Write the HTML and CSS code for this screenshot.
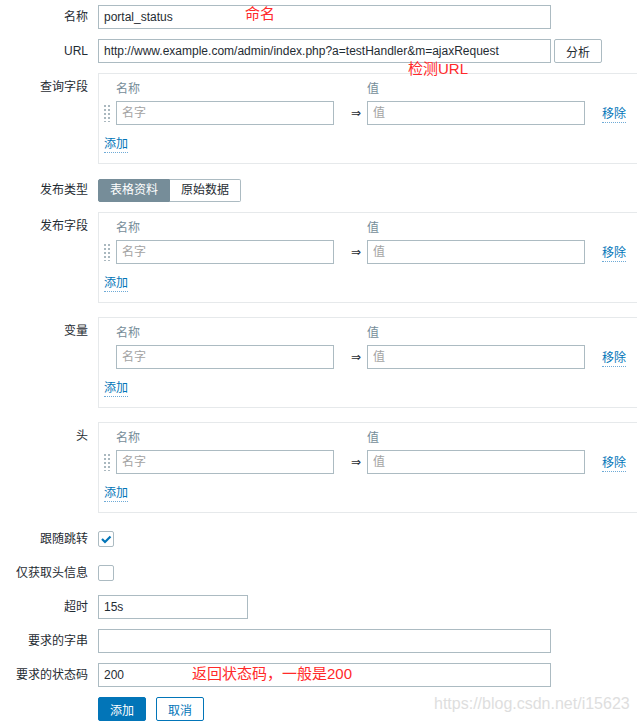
FILE: index.html
```html
<!DOCTYPE html>
<html lang="zh-CN">
<head>
  <meta charset="UTF-8">
  <meta name="viewport" content="width=device-width, initial-scale=1.0">
  <title>Web 场景步骤</title>
  <link rel="stylesheet" href="styles.css">
</head>
<body>

<div class="step-form">
  <!-- 名称 -->
  <div class="form-row">
    <label class="form-label">名称</label>
    <div class="form-field">
      <input type="text" class="input input-wide" value="portal_status">
    </div>
  </div>

  <!-- URL -->
  <div class="form-row">
    <label class="form-label">URL</label>
    <div class="form-field">
      <input type="text" class="input input-wide" value="http://www.example.com/admin/index.php?a=testHandler&amp;m=ajaxRequest">
      <button type="button" class="btn-grey">分析</button>
    </div>
  </div>

  <!-- 查询字段 -->
  <div class="form-row box-row">
    <label class="form-label">查询字段</label>
    <div class="form-field">
      <div class="pair-box">
        <div class="pair-head">
          <span class="col-handle"></span>
          <span class="col-name">名称</span>
          <span class="col-arrow"></span>
          <span class="col-value">值</span>
        </div>
        <div class="pair-row">
          <span class="col-handle"><span class="drag-handle"></span></span>
          <input type="text" class="input col-name" placeholder="名字">
          <span class="col-arrow">&rArr;</span>
          <input type="text" class="input col-value" placeholder="值">
          <a href="#" class="link-action">移除</a>
        </div>
        <div class="pair-add"><a href="#" class="link-action">添加</a></div>
      </div>
    </div>
  </div>

  <!-- 发布类型 -->
  <div class="form-row">
    <label class="form-label">发布类型</label>
    <div class="form-field">
      <div class="radio-seg">
        <span class="seg seg-on">表格资料</span>
        <span class="seg">原始数据</span>
      </div>
    </div>
  </div>

  <!-- 发布字段 -->
  <div class="form-row box-row">
    <label class="form-label">发布字段</label>
    <div class="form-field">
      <div class="pair-box">
        <div class="pair-head">
          <span class="col-handle"></span>
          <span class="col-name">名称</span>
          <span class="col-arrow"></span>
          <span class="col-value">值</span>
        </div>
        <div class="pair-row">
          <span class="col-handle"><span class="drag-handle"></span></span>
          <input type="text" class="input col-name" placeholder="名字">
          <span class="col-arrow">&rArr;</span>
          <input type="text" class="input col-value" placeholder="值">
          <a href="#" class="link-action">移除</a>
        </div>
        <div class="pair-add"><a href="#" class="link-action">添加</a></div>
      </div>
    </div>
  </div>

  <!-- 变量 -->
  <div class="form-row box-row">
    <label class="form-label">变量</label>
    <div class="form-field">
      <div class="pair-box">
        <div class="pair-head">
          <span class="col-handle"></span>
          <span class="col-name">名称</span>
          <span class="col-arrow"></span>
          <span class="col-value">值</span>
        </div>
        <div class="pair-row">
          <span class="col-handle"></span>
          <input type="text" class="input col-name" placeholder="名字">
          <span class="col-arrow">&rArr;</span>
          <input type="text" class="input col-value" placeholder="值">
          <a href="#" class="link-action">移除</a>
        </div>
        <div class="pair-add"><a href="#" class="link-action">添加</a></div>
      </div>
    </div>
  </div>

  <!-- 头 -->
  <div class="form-row box-row">
    <label class="form-label">头</label>
    <div class="form-field">
      <div class="pair-box">
        <div class="pair-head">
          <span class="col-handle"></span>
          <span class="col-name">名称</span>
          <span class="col-arrow"></span>
          <span class="col-value">值</span>
        </div>
        <div class="pair-row">
          <span class="col-handle"><span class="drag-handle"></span></span>
          <input type="text" class="input col-name" placeholder="名字">
          <span class="col-arrow">&rArr;</span>
          <input type="text" class="input col-value" placeholder="值">
          <a href="#" class="link-action">移除</a>
        </div>
        <div class="pair-add"><a href="#" class="link-action">添加</a></div>
      </div>
    </div>
  </div>

  <!-- 跟随跳转 -->
  <div class="form-row">
    <label class="form-label">跟随跳转</label>
    <div class="form-field">
      <span class="checkbox">
        <svg width="14" height="14" viewBox="0 0 14 14"><path d="M3 7 L6 10 L11.5 4.5" fill="none" stroke="#0275b8" stroke-width="2.2"/></svg>
      </span>
    </div>
  </div>

  <!-- 仅获取头信息 -->
  <div class="form-row">
    <label class="form-label">仅获取头信息</label>
    <div class="form-field">
      <span class="checkbox"></span>
    </div>
  </div>

  <div class="form-row">
    <label class="form-label">超时</label>
    <div class="form-field">
      <input type="text" class="input input-small" value="15s">
    </div>
  </div>

  <div class="form-row">
    <label class="form-label">要求的字串</label>
    <div class="form-field">
      <input type="text" class="input input-wide" value="">
    </div>
  </div>

  <div class="form-row">
    <label class="form-label">要求的状态码</label>
    <div class="form-field">
      <input type="text" class="input input-wide" value="200">
    </div>
  </div>

  <div class="form-row">
    <span class="form-label"></span>
    <div class="form-field">
      <button type="button" class="btn-main">添加</button>
      <button type="button" class="btn-alt">取消</button>
    </div>
  </div>

  <!-- annotations drawn over the screenshot -->
  <span class="note note-name">命名</span>
  <span class="note note-url">检测URL</span>
  <span class="note note-code">返回状态码，一般是200</span>
  <span class="watermark">https://blog.csdn.net/i15623</span>
</div>

</body>
</html>
```

FILE: styles.css
```css
html {
  overflow: hidden;
}

body {
  margin: 0;
  background: #fff;
  color: #1f2c33;
  font-family: "Liberation Sans", Arial, "Noto Sans CJK SC", sans-serif;
  font-size: 12px;
}

.step-form {
  position: relative;
  padding-top: 5px;
}

/* form rows */
.form-row {
  display: flex;
  margin-bottom: 10px;
}

.box-row {
  margin-bottom: 14px;
}

.form-label {
  flex-shrink: 0;
  width: 88px;
  padding-right: 10px;
  text-align: right;
  line-height: 24px;
}

.box-row .form-label {
  padding-top: 2px;
}

.form-field {
  display: flex;
  align-items: center;
  min-height: 24px;
}

/* inputs */
.input {
  box-sizing: border-box;
  height: 24px;
  margin: 0;
  padding: 0 5px;
  border: 1px solid #acbbc2;
  border-radius: 0;
  background: #fff;
  color: #1f2c33;
  font-family: inherit;
  font-size: 12px;
  outline: none;
}

.input::placeholder {
  color: #a3a3a3;
}

.input-wide {
  width: 453px;
}

.input-small {
  width: 150px;
}

.btn-grey {
  box-sizing: border-box;
  width: 48px;
  height: 24px;
  margin-left: 3px;
  border: 1px solid #acbbc2;
  border-radius: 2px;
  background: #fff;
  color: #1f2c33;
  font-family: inherit;
  font-size: 12px;
}

/* key/value boxes */
.pair-box {
  width: 560px;
  padding: 5px 5px 8px 5px;
  border: 1px solid #e6e9eb;
}

.pair-head {
  display: flex;
  height: 20px;
  line-height: 20px;
  color: #768d99;
}

.pair-row {
  display: flex;
  align-items: center;
  height: 24px;
  margin-top: 2px;
}

.col-handle {
  display: flex;
  flex-shrink: 0;
  width: 12px;
}

.col-name,
.col-value {
  flex-shrink: 0;
  width: 218px;
}

.col-arrow {
  flex-shrink: 0;
  width: 33px;
  padding-left: 17px;
  box-sizing: border-box;
  font-family: "DejaVu Sans", sans-serif;
  font-size: 12px;
  color: #1f2c33;
}

.drag-handle {
  width: 6px;
  height: 18px;
  background-image: radial-gradient(circle, #aab8bf 1.1px, transparent 1.3px);
  background-size: 4px 4px;
  background-position: -1px 0;
}

.link-action {
  margin-left: 17px;
  margin-top: 4px;
  color: #0275b8;
  text-decoration: none;
  border-bottom: 1px dotted #6eaad6;
  line-height: 15px;
}

.pair-add {
  margin-top: 6px;
  height: 24px;
  display: flex;
  align-items: center;
}

.pair-add .link-action {
  margin-left: 0;
}

/* radio toggle */
.radio-seg {
  display: flex;
  height: 23px;
  margin-top: 1px;
}

.seg {
  box-sizing: border-box;
  height: 23px;
  line-height: 21px;
  padding: 0 11px;
  border: 1px solid #acbbc2;
  background: #fff;
}

.seg-on {
  width: 72px;
  border-color: #768d99;
  border-radius: 2px 0 0 2px;
  background: #768d99;
  color: #fff;
}

.seg:last-child {
  border-left: none;
  border-radius: 0 2px 2px 0;
}

/* checkbox */
.checkbox {
  box-sizing: border-box;
  display: flex;
  align-items: center;
  justify-content: center;
  width: 16px;
  height: 16px;
  margin-top: -1px;
  border: 1px solid #acbbc2;
  border-radius: 2px;
  background: #fff;
}

/* buttons */
.btn-main,
.btn-alt {
  box-sizing: border-box;
  width: 48px;
  height: 24px;
  margin-right: 10px;
  border: 1px solid #0275b8;
  border-radius: 2px;
  font-family: inherit;
  font-size: 12px;
}

.btn-main {
  background: #0275b8;
  color: #fff;
}

.btn-alt {
  background: #fff;
  color: #0275b8;
}

/* red notes + watermark */
.note {
  position: absolute;
  color: #ff2a2a;
  font-family: "Liberation Sans", "Noto Sans CJK SC", sans-serif;
  font-size: 15px;
  line-height: 16px;
}

.note-name {
  left: 245px;
  top: 6px;
}

.note-url {
  left: 408px;
  top: 61px;
}

.note-code {
  left: 192px;
  top: 666px;
}

.watermark {
  position: absolute;
  left: 434px;
  top: 694px;
  color: #dedede;
  font-size: 16px;
  line-height: 20px;
}
```
